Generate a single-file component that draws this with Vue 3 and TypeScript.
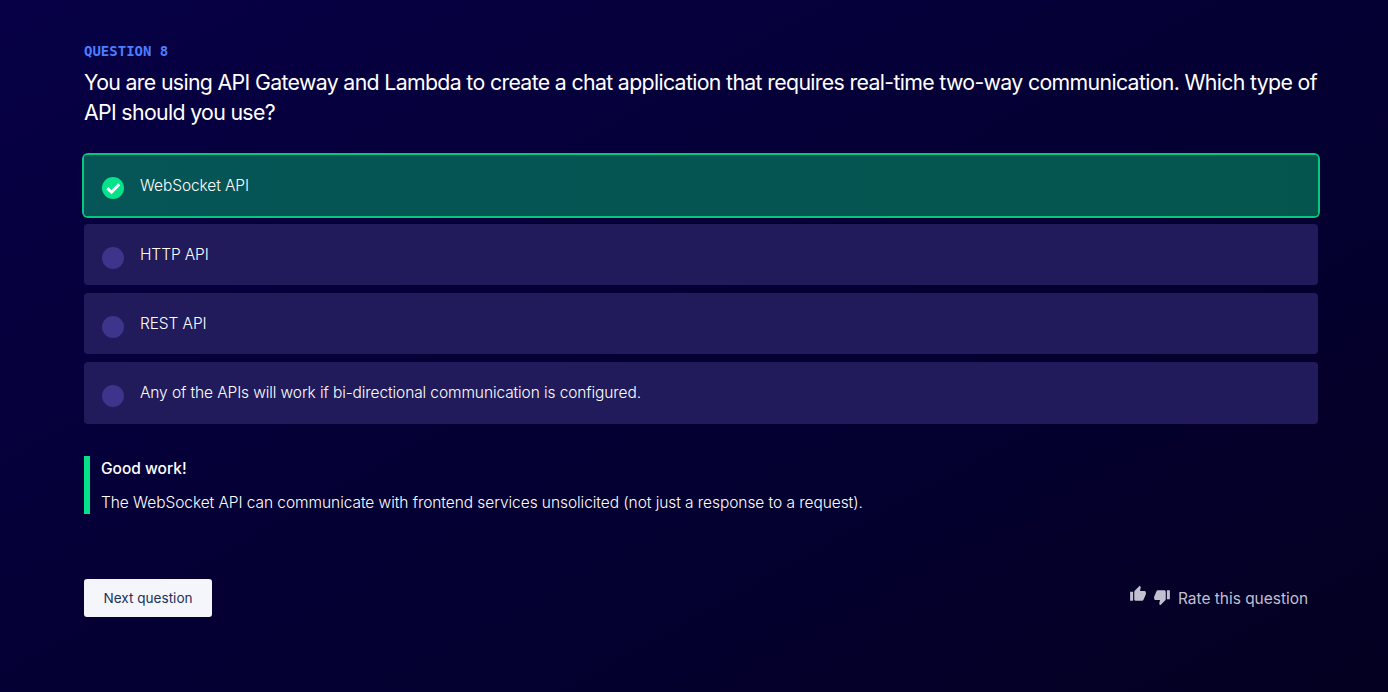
<script setup lang="ts">
interface Answer {
  text: string
  correct: boolean
}

const answers: Answer[] = [
  { text: 'WebSocket API', correct: true },
  { text: 'HTTP API', correct: false },
  { text: 'REST API', correct: false },
  { text: 'Any of the APIs will work if bi-directional communication is configured.', correct: false },
]
</script>

<template>
  <main class="quiz">
    <div class="eyebrow">QUESTION 8</div>
    <h1 class="title">
      <span class="line">You are using API Gateway and Lambda to create a chat application that requires real-time two-way communication. Which type of</span>
      <span class="line">API should you use?</span>
    </h1>

    <ul class="answers">
      <li v-for="answer in answers" :key="answer.text" class="answer" :class="{ correct: answer.correct }">
        <span class="marker">
          <svg v-if="answer.correct" width="22" height="22" viewBox="0 0 22 22">
            <path d="M5.2 11.1 9.5 15.2 17.2 7.3" fill="none" stroke="#fff" stroke-width="2.9" />
          </svg>
        </span>
        <span class="answer-text">{{ answer.text }}</span>
      </li>
    </ul>

    <section class="feedback">
      <strong class="feedback-title">Good work!</strong>
      <p class="feedback-text">The WebSocket API can communicate with frontend services unsolicited (not just a response to a request).</p>
    </section>

    <footer class="footer">
      <button class="next" type="button"><span>Next question</span></button>
      <div class="rate">
        <svg class="up" width="18" height="18" viewBox="0 0 24 24">
          <path d="M1.5 21h4V9h-4v12zm21-11c0-1.1-.9-2-2-2h-5.81l.95-4.57.03-.32c0-.41-.17-.79-.44-1.06L14.17 1 7.59 7.59C7.22 7.95 7 8.45 7 9v10c0 1.1.9 2 2 2h8.5c.83 0 1.54-.5 1.84-1.22l3.02-7.05c.09-.23.14-.47.14-.73v-2z" />
        </svg>
        <svg class="down" width="18" height="18" viewBox="0 0 24 24">
          <path d="M15 3H6.5c-.83 0-1.54.5-1.84 1.22l-3.02 7.05c-.09.23-.14.47-.14.73v2c0 1.1.9 2 2 2h5.81l-.95 4.57-.03.32c0 .41.17.79.44 1.06L9.83 23l6.59-6.59c.36-.36.58-.86.58-1.41V5c0-1.1-.9-2-2-2zm3.5 0v12h4V3h-4z" />
        </svg>
        <span class="rate-text">Rate this question</span>
      </div>
    </footer>
  </main>
</template>

<style>
body {
  margin: 0;
  background: #040028;
}
</style>

<style scoped>
.quiz {
  box-sizing: border-box;
  width: 1388px;
  height: 692px;
  padding: 41px 70px 0 84px;
  overflow: hidden;
  color: #fff;
  font-family: Inter, "Liberation Sans", sans-serif;
  font-size: 15.5px;
  background: linear-gradient(151deg, #070047 0%, #050035 45%, #040030 65%, #040021 100%);
}

.eyebrow {
  height: 20px;
  font: 700 14px/20px "DejaVu Sans Mono", monospace;
  color: #4a7dff;
}

.title {
  margin: 6px 0 0;
  font-size: 21.3px;
  font-weight: 400;
  line-height: 30px;
  letter-spacing: -0.66px;
}

.line {
  display: block;
  white-space: nowrap;
}

.answers {
  display: flex;
  flex-direction: column;
  gap: 8px;
  margin: 28px 0 0;
  padding: 0;
  list-style: none;
}

.answer {
  box-sizing: border-box;
  display: flex;
  height: 61px;
  padding: 20px 18px 0;
  gap: 16px;
  border-radius: 4px;
  background: #211b5b;
}

.answer.correct {
  background: linear-gradient(90deg, #065557, #05554f);
  box-shadow: 0 0 0 2px #05c77d;
}

.answer:last-child {
  height: 62px;
}

.marker {
  width: 22px;
  height: 22px;
  margin-top: 3px;
  border-radius: 50%;
  background: #3d348b;
}

.correct .marker {
  margin-top: 2px;
  background: #05e38a;
}

.marker svg {
  display: block;
}

.answer-text {
  font-weight: 300;
  line-height: 22px;
  letter-spacing: -0.1px;
}

.feedback {
  box-sizing: border-box;
  height: 58px;
  margin-top: 32px;
  padding-left: 11px;
  border-left: 6px solid #05e38a;
}

.feedback-title {
  display: block;
  font-weight: 500;
  line-height: 25px;
}

.feedback-text {
  margin: 9px 0 0;
  font-weight: 300;
  line-height: 25px;
  letter-spacing: -0.06px;
}

.footer {
  display: flex;
  justify-content: space-between;
  margin-top: 65px;
}

.next {
  box-sizing: border-box;
  width: 128px;
  height: 38px;
  padding: 0;
  border: 0;
  border-radius: 3px;
  background: #f4f6fc;
  color: #20315a;
  font: 400 13.6px/38px Inter, "Liberation Sans", sans-serif;
}

.rate {
  display: flex;
  width: 189px;
  color: #c2bfd0;
}

.rate svg {
  fill: currentColor;
  flex: none;
}

.up {
  margin-top: 6px;
}

.down {
  margin: 9px 0 0 6px;
}

.rate-text {
  margin-left: 7px;
  line-height: 40px;
  white-space: nowrap;
  letter-spacing: -0.03px;
}
</style>
